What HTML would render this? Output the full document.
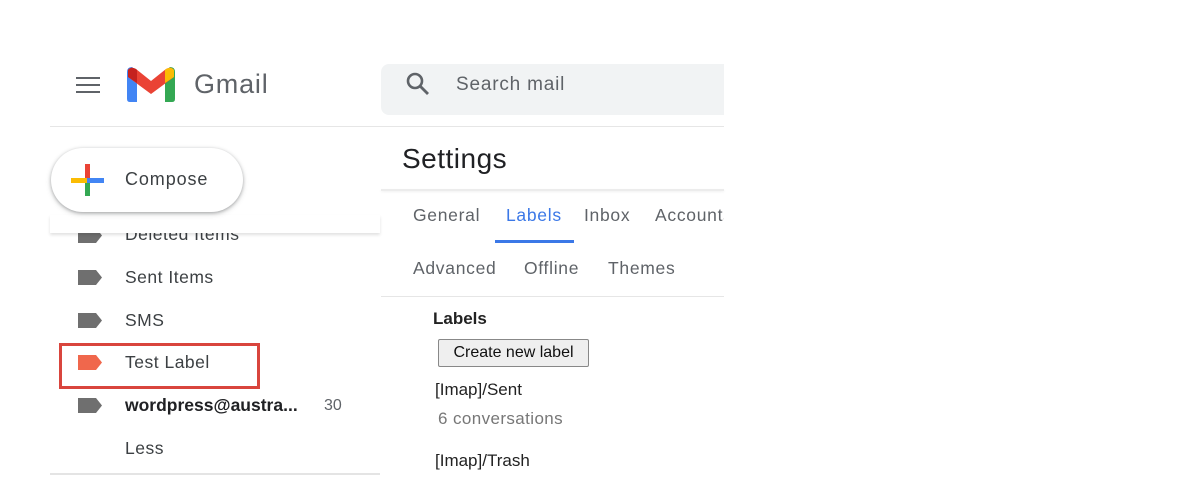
<!DOCTYPE html>
<html><head><meta charset="utf-8"><style>
*{margin:0;padding:0;box-sizing:border-box}
body{width:1200px;height:500px;background:#fff;position:relative;overflow:hidden;font-family:"Liberation Sans",Arial,sans-serif;color:#202124}
.a{position:absolute;white-space:nowrap}
.lbl{position:absolute;left:78px;width:24px;height:15px}
.row{position:absolute;left:125px;font-size:17.5px;color:#3c4043;letter-spacing:0.5px}
.tab{position:absolute;font-size:17.5px;color:#5f6368;top:205px;letter-spacing:0.7px}
.tab2{position:absolute;font-size:17.5px;color:#5f6368;top:258px;letter-spacing:0.7px}
</style></head><body>
<!-- hamburger -->
<div class="a" style="left:76px;top:77px;width:24px;height:2px;background:#5f6368"></div>
<div class="a" style="left:76px;top:84px;width:24px;height:2px;background:#5f6368"></div>
<div class="a" style="left:76px;top:91px;width:24px;height:2px;background:#5f6368"></div>
<!-- M logo -->
<svg class="a" style="left:127px;top:67px" width="48" height="35" viewBox="0 0 48 35">
<path d="M0 5 Q0 0 5 0 L10 4 V35 H3 Q0 35 0 32Z" fill="#4285f4"/>
<path d="M48 5 Q48 0 43 0 L38 4 V35 H45 Q48 35 48 32Z" fill="#34a853"/>
<path d="M1 3 Q4 -1 9 2 L24 14 L39 2 Q44 -1 47 3 L47 10 L24 27 L1 10Z" fill="#ea4335"/>
<path d="M1 3 Q4 -1 9 2 L10 3 V16 L1 10Z" fill="#c5221f"/>
<path d="M47 3 Q44 -1 39 2 L38 3 V16 L47 10Z" fill="#fbbc04"/>
</svg>
<div class="a" style="left:194px;top:69px;font-size:27px;color:#5f6368;letter-spacing:0.8px">Gmail</div>
<!-- search -->
<div class="a" style="left:381px;top:64px;width:343px;height:51px;background:#f1f3f4;border-radius:8px 0 0 8px"></div>
<svg class="a" style="left:405px;top:71px" width="26" height="26" viewBox="0 0 26 26"><circle cx="10" cy="10" r="7" fill="none" stroke="#5f6368" stroke-width="2.6"/><path d="M15 15 L23 23" stroke="#5f6368" stroke-width="2.8"/></svg>
<div class="a" style="left:456px;top:74px;font-size:19px;color:#5f6368;letter-spacing:0.8px">Search mail</div>
<div class="a" style="left:50px;top:126px;width:674px;height:1px;background:#e6e6e6"></div>
<!-- sidebar rows -->
<div class="lbl" style="top:228px;background:#6f6f6f;clip-path:polygon(0 0,75% 0,100% 50%,75% 100%,0 100%)"></div>
<div class="row" style="top:224px">Deleted Items</div>
<div class="a" style="left:50px;top:215px;width:330px;height:18px;background:#fff;box-shadow:0 2px 3px rgba(0,0,0,.12)"></div>
<div class="lbl" style="top:270px;background:#6f6f6f;clip-path:polygon(0 0,75% 0,100% 50%,75% 100%,0 100%)"></div>
<div class="row" style="top:267px">Sent Items</div>
<div class="lbl" style="top:313px;background:#6f6f6f;clip-path:polygon(0 0,75% 0,100% 50%,75% 100%,0 100%)"></div>
<div class="row" style="top:310px">SMS</div>
<div class="lbl" style="top:355px;background:#f0674c;clip-path:polygon(0 0,75% 0,100% 50%,75% 100%,0 100%)"></div>
<div class="row" style="top:352px">Test Label</div>
<div class="a" style="left:59px;top:343px;width:201px;height:46px;border:3px solid #d9453d"></div>
<div class="lbl" style="top:398px;background:#6f6f6f;clip-path:polygon(0 0,75% 0,100% 50%,75% 100%,0 100%)"></div>
<div class="row" style="top:395px;font-weight:bold;color:#202124;letter-spacing:0">wordpress@austra...</div>
<div class="a" style="left:324px;top:397px;font-size:16px;color:#5f6368">30</div>
<div class="row" style="top:438px">Less</div>
<div class="a" style="left:50px;top:473px;width:330px;height:2px;background:#e4e4e4"></div>
<!-- compose -->
<div class="a" style="left:51px;top:148px;width:192px;height:64px;border-radius:32px;background:#fff;box-shadow:0 1px 3px rgba(60,64,67,.35),0 2px 6px rgba(60,64,67,.2)"></div>
<div class="a" style="left:85px;top:164px;width:5px;height:16px;background:#ea4335"></div>
<div class="a" style="left:85px;top:180px;width:5px;height:16px;background:#34a853"></div>
<div class="a" style="left:71px;top:178px;width:16px;height:5px;background:#fbbc04"></div>
<div class="a" style="left:87px;top:178px;width:17px;height:5px;background:#4285f4"></div>
<div class="a" style="left:125px;top:169px;font-size:18px;color:#3c4043;letter-spacing:0.9px">Compose</div>
<!-- settings -->
<div class="a" style="left:402px;top:143px;font-size:28px;color:#202124;letter-spacing:0.5px">Settings</div>
<div class="a" style="left:381px;top:189px;width:343px;height:2px;background:#ececec;box-shadow:0 1px 2px rgba(0,0,0,.06)"></div>
<div class="tab" style="left:413px">General</div>
<div class="tab" style="left:506px;color:#3b78e7">Labels</div>
<div class="tab" style="left:584px">Inbox</div>
<div style="position:absolute;left:655px;top:205px;width:69px;overflow:hidden;font-size:17.5px;color:#5f6368;white-space:nowrap;letter-spacing:0.7px">Accounts</div>
<div class="a" style="left:495px;top:240px;width:79px;height:3px;background:#3b78e7"></div>
<div class="tab2" style="left:413px">Advanced</div>
<div class="tab2" style="left:524px">Offline</div>
<div class="tab2" style="left:608px">Themes</div>
<div class="a" style="left:381px;top:296px;width:343px;height:1px;background:#e6e6e6"></div>
<div class="a" style="left:433px;top:309px;font-size:17px;font-weight:bold;color:#222">Labels</div>
<div class="a" style="left:438px;top:339px;width:151px;height:28px;border:1px solid #888;border-radius:2px;background:#efefef;font-size:16px;color:#111;text-align:center;line-height:26px">Create new label</div>
<div class="a" style="left:435px;top:380px;font-size:17px;color:#222">[Imap]/Sent</div>
<div class="a" style="left:438px;top:409px;font-size:17px;color:#777;letter-spacing:0.4px">6 conversations</div>
<div class="a" style="left:435px;top:451px;font-size:17px;color:#222">[Imap]/Trash</div>
</body></html>
